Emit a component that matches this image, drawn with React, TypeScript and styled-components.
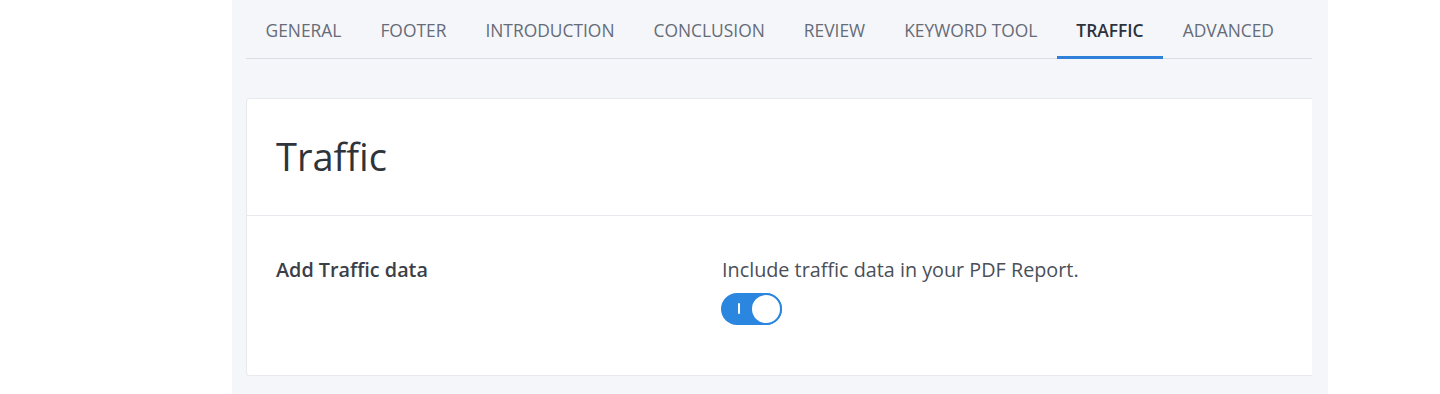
import React, { useState } from "react";
import styled, { createGlobalStyle } from "styled-components";

const GlobalStyle = createGlobalStyle`
  html, body {
    margin: 0;
    padding: 0;
    background: #ffffff;
    font-family: "Open Sans", "Noto Sans", Arial, sans-serif;
  }
`;

const Page = styled.div`
  display: flex;
  height: 394px;
  overflow: hidden;
`;

const SideSpace = styled.div`
  width: 232px;
  flex-shrink: 0;
  background: #ffffff;
`;

const Main = styled.main`
  width: 1096px;
  flex-shrink: 0;
  background: #f5f6fa;
  padding: 0 16px 18px 14px;
  box-sizing: border-box;
  display: flex;
  flex-direction: column;
`;

const TabBar = styled.nav`
  display: flex;
  border-bottom: 1px solid #dadde3;
  height: 58px;
`;

const Tab = styled.button<{ $active?: boolean }>`
  border: none;
  background: none;
  padding: 3px 19.5px 0;
  margin-bottom: -1px;
  font-family: "Open Sans", "Noto Sans", Arial, sans-serif;
  font-size: 17.4px;
  font-weight: ${(p) => (p.$active ? 600 : 400)};
  color: ${(p) => (p.$active ? "#2c323c" : "#656b77")};
  text-transform: uppercase;
  cursor: pointer;
  border-bottom: 3px solid ${(p) => (p.$active ? "#2f80d8" : "transparent")};
`;

const Card = styled.section`
  margin-top: 39px;
  background: #ffffff;
  border: 1px solid #e8e9ee;
  border-right: none;
  border-radius: 4px 0 0 4px;
`;

const CardHeader = styled.header`
  padding: 34px 29px 36px;
  border-bottom: 1px solid #e8e9ee;
`;

const Title = styled.h1`
  margin: 0;
  font-size: 38px;
  font-weight: 400;
  line-height: 46px;
  color: #2f343c;
`;

const CardBody = styled.div`
  display: grid;
  grid-template-columns: 446px 1fr;
  padding: 41px 29px 50px;
`;

const Label = styled.div`
  font-size: 19.8px;
  font-weight: 600;
  color: #3a3f48;
  line-height: 26px;
`;

const Field = styled.div`
  display: flex;
  flex-direction: column;
  align-items: flex-start;
  gap: 10px;
`;

const Help = styled.div`
  font-size: 19.8px;
  color: #4a4f58;
  line-height: 26px;
`;

const Switch = styled.button<{ $on: boolean }>`
  position: relative;
  width: 61px;
  height: 32px;
  border-radius: 16px;
  border: none;
  padding: 0;
  margin-left: -1px;
  cursor: pointer;
  background: ${(p) => (p.$on ? "#2b86e0" : "#c9ced6")};
`;

const Knob = styled.span<{ $on: boolean }>`
  position: absolute;
  top: 0;
  left: ${(p) => (p.$on ? "29px" : "0")};
  width: 32px;
  height: 32px;
  border-radius: 50%;
  background: #ffffff;
  box-sizing: border-box;
  border: 2px solid #2b86e0;
`;

const OnMark = styled.span`
  position: absolute;
  left: 17px;
  top: 10px;
  width: 2px;
  height: 11px;
  background: #ffffff;
  border-radius: 1px;
`;

const tabs = [
  "General",
  "Footer",
  "Introduction",
  "Conclusion",
  "Review",
  "Keyword Tool",
  "Traffic",
  "Advanced",
];

export default function App() {
  const [active, setActive] = useState("Traffic");
  const [on, setOn] = useState(true);

  return (
    <>
      <GlobalStyle />
      <Page>
        <SideSpace />
        <Main>
          <TabBar>
            {tabs.map((t) => (
              <Tab key={t} $active={t === active} onClick={() => setActive(t)}>
                {t}
              </Tab>
            ))}
          </TabBar>
          <Card>
            <CardHeader>
              <Title>Traffic</Title>
            </CardHeader>
            <CardBody>
              <Label>Add Traffic data</Label>
              <Field>
                <Help>Include traffic data in your PDF Report.</Help>
                <Switch $on={on} onClick={() => setOn(!on)} aria-label="Add Traffic data">
                  {on && <OnMark />}
                  <Knob $on={on} />
                </Switch>
              </Field>
            </CardBody>
          </Card>
        </Main>
      </Page>
    </>
  );
}
